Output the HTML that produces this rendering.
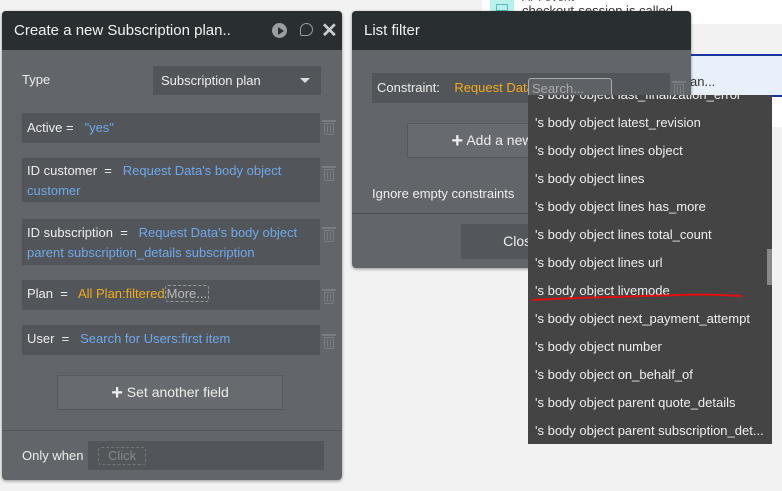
<!DOCTYPE html>
<html><head><style>
*{box-sizing:border-box;margin:0;padding:0}
body{width:782px;height:491px;background:#f2f2f2;position:relative;overflow:hidden;font-family:"Liberation Sans",sans-serif;font-size:13px;color:#eee}
.a{position:absolute}
.panel{position:absolute;background:#62666a;border-radius:4px;box-shadow:0 1px 3px rgba(0,0,0,.4);overflow:hidden}
.hd{position:absolute;left:0;right:0;top:0;height:39px;background:#292e31;font-size:15px;color:#f2f2f2;padding:11px 12px}
.row{position:absolute;background:#52565a;padding:0 5px;line-height:20px}
.b{color:#6fa8e8}.o{color:#f0ac1a}
.tr{position:absolute;width:10px;height:12px;border:1.5px solid #7a7e82;border-radius:0 0 2px 2px}
.tr:before{content:"";position:absolute;left:-3.5px;top:-4px;width:14px;height:2px;background:#7a7e82}
.tr:after{content:"";position:absolute;left:2px;top:1px;width:2px;height:8px;border-left:1px solid #7a7e82;border-right:1px solid #7a7e82}
.btn{position:absolute;background:#676b6f;border:1px solid #55595d;font-size:14px;text-align:center}
.dd div{height:28px;line-height:28px;padding-left:7px;color:#f0f0f0;white-space:nowrap}
</style></head><body>
<div class="a" style="left:482px;top:0;width:300px;height:24px;background:#fff"></div>
<div class="a" style="left:490px;top:0;width:24px;height:24px;background:#b8f2ee"></div>
<div class="a" style="left:496px;top:4px;width:12px;height:7px;border:1px solid #5bb;border-radius:1px"></div>
<div class="a" style="left:522px;top:-10px;color:#555;font-size:12px;line-height:14px">API event</div>
<div class="a" style="left:522px;top:3px;color:#333;font-size:13px;line-height:16px">checkout-session is called</div>
<div class="a" style="left:660px;top:54px;width:122px;height:43px;background:#e8f0fb;border-top:2px solid #1a35a0;border-bottom:2px solid #1a35a0"></div>
<div class="a" style="left:690px;top:74px;color:#333;font-size:13px">an...</div>
<div class="a" style="left:772px;top:97px;width:10px;height:30px;background:#fff"></div>

<div class="panel" style="left:2px;top:11px;width:340px;height:469px">
 <div class="hd">Create a new Subscription plan..</div>
 <div class="a" style="left:270px;top:12px;width:15px;height:15px;border-radius:50%;background:#9a9ea2"></div>
 <div class="a" style="left:276px;top:16px;width:0;height:0;border-left:6px solid #292e31;border-top:4px solid transparent;border-bottom:4px solid transparent"></div>
 <div class="a" style="left:298px;top:12px;width:13px;height:13px;border-radius:50% 50% 50% 2px;border:1.5px solid #9a9ea2"></div>
 <div class="a" style="left:319px;top:7px;font-size:20px;font-weight:bold;color:#c8ccd0">✕</div>
 <div class="a" style="left:20px;top:61px">Type</div>
 <div class="row" style="left:151px;top:55px;width:168px;height:29px;padding:5px 8px">Subscription plan</div>
 <div class="a" style="left:298px;top:67px;border-top:5px solid #ddd;border-left:5px solid transparent;border-right:5px solid transparent"></div>
 <div class="row" style="left:20px;top:102px;width:298px;height:30px;padding-top:5px">Active = &nbsp; <span class="b">"yes"</span></div>
 <div class="row" style="left:20px;top:147px;width:298px;height:44px;padding-top:3px">ID customer &nbsp;= &nbsp; <span class="b">Request Data's body object customer</span></div>
 <div class="row" style="left:20px;top:208px;width:298px;height:46px;padding-top:4px">ID subscription &nbsp;= &nbsp; <span class="b">Request Data's body object parent subscription_details subscription</span></div>
 <div class="row" style="left:20px;top:269px;width:298px;height:30px;padding-top:4px">Plan &nbsp;= &nbsp; <span class="o">All Plan:filtered</span><span style="color:#bbb;border:1px dashed #999;border-radius:3px;padding:0 1px;line-height:14px">More...</span></div>
 <div class="row" style="left:20px;top:314px;width:298px;height:30px;padding-top:4px">User &nbsp;= &nbsp; <span class="b">Search for Users:first item</span></div>
 <div class="tr" style="left:322px;top:112px"></div>
 <div class="tr" style="left:322px;top:158px"></div>
 <div class="tr" style="left:322px;top:219px"></div>
 <div class="tr" style="left:322px;top:281px"></div>
 <div class="tr" style="left:322px;top:326px"></div>
 <div class="btn" style="left:55px;top:364px;width:226px;height:35px;line-height:33px"><b style="font-size:20px;vertical-align:-2px">+</b> Set another field</div>
 <div class="a" style="left:0;top:419px;width:340px;height:1px;background:#55595d"></div>
 <div class="a" style="left:20px;top:437px">Only when</div>
 <div class="row" style="left:86px;top:430px;width:236px;height:29px"></div>
 <div class="a" style="left:96px;top:436px;color:#888;border:1px dashed #777;border-radius:3px;padding:0 9px;line-height:16px">Click</div>
</div>

<div class="panel" style="left:352px;top:11px;width:339px;height:257px">
 <div class="hd">List filter</div>
 <div class="row" style="left:20px;top:62px;width:298px;height:30px;padding-top:5px">Constraint: &nbsp; &nbsp;<span class="o">Request Data</span></div>
 <div class="tr" style="left:322px;top:73px"></div>
 <div class="btn" style="left:55px;top:112px;width:170px;height:35px;line-height:33px"><b style="font-size:20px;vertical-align:-2px">+</b> Add a new</div>
 <div class="a" style="left:20px;top:175px">Ignore empty constraints</div>
 <div class="a" style="left:0;top:202px;width:339px;height:1px;background:#4a4e52"></div>
 <div class="btn" style="left:109px;top:213px;width:120px;height:35px;line-height:33px;background:#53575b">Close</div>
</div>
<div class="a" style="left:528px;top:78px;width:84px;height:20px;border:1px solid #aaa;border-radius:3px;background:#5e6266;color:#aaa;padding:2px 3px;font-size:13px">Search...</div>

<div class="a dd" style="left:528px;top:95px;width:244px;height:349px;background:#444;overflow:hidden;font-size:13px">
 <div style="height:14px;line-height:0;margin-top:0">'s body object last_finalization_error</div>
 <div>'s body object latest_revision</div>
 <div>'s body object lines object</div>
 <div>'s body object lines</div>
 <div>'s body object lines has_more</div>
 <div>'s body object lines total_count</div>
 <div>'s body object lines url</div>
 <div>'s body object livemode</div>
 <div>'s body object next_payment_attempt</div>
 <div>'s body object number</div>
 <div>'s body object on_behalf_of</div>
 <div>'s body object parent quote_details</div>
 <div>'s body object parent subscription_det...</div>
</div>
<div class="a" style="left:767px;top:249px;width:5px;height:36px;background:#888"></div>
<svg class="a" style="left:530px;top:292px" width="215" height="12"><path d="M2 8 Q40 6 80 5 T150 3 T212 4" stroke="#e01010" stroke-width="2" fill="none"/></svg>
</body></html>
